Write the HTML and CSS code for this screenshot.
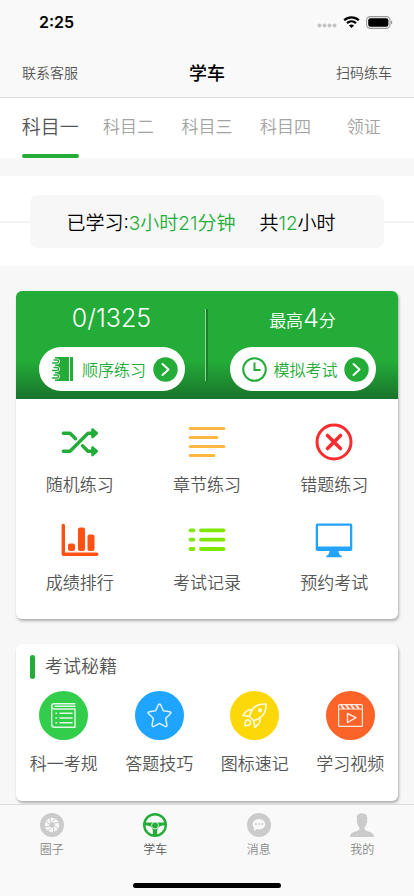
FILE: index.html
```html
<!DOCTYPE html>
<html lang="zh-CN">
<head>
    <meta charset="UTF-8">
    <meta name="viewport" content="width=device-width, initial-scale=1.0">
    <title>学车</title>
    <link rel="stylesheet" href="styles.css">
</head>
<body>
    <header class="header">
        <div class="status-bar">
            <span class="time">2:25</span>
            <div class="status-icons">
                <svg width="20" height="12" viewBox="0 0 20 12" fill="#c4c4c4">
                    <circle cx="2.500" cy="9.500" r="2"/><circle cx="7.500" cy="9.500" r="2"/><circle cx="12.500" cy="9.500" r="2"/><circle cx="17.500" cy="9.500" r="2"/>
                </svg>
                <svg width="17" height="12" viewBox="0 0 17 12" fill="none" stroke="#000" stroke-width="2.300">
                    <path d="M1.200 4.300C5.300.3 11.700.3 15.800 4.300"/>
                    <path d="M4 7.200c2.600-2.400 6.400-2.400 9 0"/>
                    <path d="M8.500 12 5.900 9.400c1.500-1.300 3.700-1.300 5.200 0z" fill="#000" stroke="none"/>
                </svg>
                <svg width="27" height="13" viewBox="0 0 27 13">
                    <rect x=".6" y=".6" width="23.400" height="11.800" rx="3.600" fill="none" stroke="#999" stroke-width="1.100"/>
                    <rect x="2.200" y="2.200" width="20.200" height="8.600" rx="2.200"/>
                    <path d="M25 4.500c1.800.8 1.800 3.200 0 4z" fill="#999"/>
                </svg>
            </div>
        </div>
        <div class="title-bar">
            <a class="title-link" href="#service">联系客服</a>
            <h1 class="title">学车</h1>
            <a class="title-link right" href="#scan">扫码练车</a>
        </div>
    </header>

    <nav class="subjects">
        <a class="subject active" href="#s1">科目一</a>
        <a class="subject" href="#s2">科目二</a>
        <a class="subject" href="#s3">科目三</a>
        <a class="subject" href="#s4">科目四</a>
        <a class="subject" href="#license">领证</a>
    </nav>

    <main class="content">
        <section class="hours">
            <p class="hours-box">
                <span>已学习:<span class="green">3小时21分钟</span></span>
                <span>共<span class="green">12</span>小时</span>
            </p>
        </section>

        <section class="card">
            <div class="score">
                <div class="score-item">
                    <p class="score-text"><span class="big">0/1325</span></p>
                    <button class="pill" type="button">
                        <svg width="24" height="26" viewBox="0 0 24 26">
                            <path d="M4 1h14v24H4zM19 1h3v24h-3z" fill="#23ac38"/>
                            <path d="M0 3h6a2 2 0 0 1 0 5H0zM0 10.500h6a2 2 0 0 1 0 5H0zM0 18h6a2 2 0 0 1 0 5H0z" fill="#fff" stroke="#fff" stroke-width="1"/>
                            <path d="M3 4h3a1.500 1.500 0 0 1 0 3H1.500M3 11.500h3a1.500 1.500 0 0 1 0 3H1.500M3 19h3a1.500 1.500 0 0 1 0 3H1.500" fill="none" stroke="#23ac38" stroke-width="1.500" stroke-linecap="round"/>
                        </svg>
                        <span>顺序练习</span>
                        <svg width="25" height="25" viewBox="0 0 25 25">
                            <circle cx="12.500" cy="12.500" r="12.200" fill="#23ac38"/>
                            <path d="m9.500 7 6 5.500-6 5.500" fill="none" stroke="#fff" stroke-width="2" stroke-linecap="round" stroke-linejoin="round"/>
                        </svg>
                    </button>
                </div>
                <div class="score-item">
                    <p class="score-text">最高<span class="big">4</span>分</p>
                    <button class="pill" type="button">
                        <svg width="25" height="25" viewBox="0 0 25 25" fill="none" stroke="#23ac38">
                            <circle cx="12.500" cy="12.500" r="11.300" stroke-width="2"/>
                            <path d="M12.500 5.500v7.500h6" stroke-width="2"/>
                        </svg>
                        <span>模拟考试</span>
                        <svg width="25" height="25" viewBox="0 0 25 25">
                            <circle cx="12.500" cy="12.500" r="12.200" fill="#23ac38"/>
                            <path d="m9.500 7 6 5.500-6 5.500" fill="none" stroke="#fff" stroke-width="2" stroke-linecap="round" stroke-linejoin="round"/>
                        </svg>
                    </button>
                </div>
            </div>
            <div class="practice">
                <a class="practice-item" href="#random">
                    <svg width="38" height="38" viewBox="0 0 38 38" fill="none" stroke="#23ac38" stroke-width="3.400" stroke-linecap="round" stroke-linejoin="round">
                        <path d="M2.300 10.300H9l5.500 5.500M2.300 28.300H9l18-18h7M21.500 22.800l5.500 5.500h7"/>
                        <path d="M31.500 6.500v7.600l4.300-3.800zM31.500 24.500v7.600l4.300-3.800z" fill="#23ac38" stroke-width="2.600"/>
                    </svg>
                    <span>随机练习</span>
                </a>
                <a class="practice-item" href="#chapter">
                    <svg width="38" height="38" viewBox="0 0 38 38" fill="none" stroke="#fbb742" stroke-width="3.200" stroke-linecap="round">
                        <path d="M2.300 5.500h33.500M2.300 14.500h26.500M2.300 23.500h33.500M2.300 32.500h23.500"/>
                    </svg>
                    <span>章节练习</span>
                </a>
                <a class="practice-item" href="#wrong">
                    <svg width="38" height="38" viewBox="0 0 38 38" fill="none" stroke="#fc2c2e" stroke-linecap="round">
                        <circle cx="19" cy="19" r="17" stroke-width="3"/>
                        <path d="m12.500 12.500 13 13m0-13-13 13" stroke-width="3.600"/>
                    </svg>
                    <span>错题练习</span>
                </a>
                <a class="practice-item" href="#ranking">
                    <svg width="38" height="38" viewBox="0 0 38 38" fill="#ff5113">
                        <path d="M2.300 4.500v28.800h33.500" fill="none" stroke="#ff5113" stroke-width="3.400" stroke-linecap="round" stroke-linejoin="round"/>
                        <rect x="7" y="22.500" width="7" height="7.500" rx="2"/>
                        <rect x="17" y="6.500" width="7" height="23.500" rx="2"/>
                        <rect x="26.500" y="13.500" width="7" height="16.500" rx="2"/>
                    </svg>
                    <span>成绩排行</span>
                </a>
                <a class="practice-item" href="#records">
                    <svg width="38" height="38" viewBox="0 0 38 38" fill="none" stroke="#7fe705" stroke-width="3.800" stroke-linecap="round">
                        <path d="M2.500 9.300h3M13 9.300h22.500M2.500 18.600h3M13 18.600h22.500M2.500 28h3M13 28h22.500"/>
                    </svg>
                    <span>考试记录</span>
                </a>
                <a class="practice-item" href="#booking">
                    <svg width="38" height="38" viewBox="0 0 38 38" fill="#23a3ff">
                        <path fill-rule="evenodd" d="M2.500 2.500h33q1.800 0 1.800 1.800v24q0 1.800-1.800 1.800h-33Q.7 30.100.7 28.300v-24q0-1.800 1.800-1.800zM3 4.800v20.700h32V4.800z"/>
                        <path d="M14.500 30h9q.3 3.800 3.200 5v1.200H11.300V35q2.900-1.200 3.200-5z"/>
                    </svg>
                    <span>预约考试</span>
                </a>
            </div>
        </section>

        <section class="card">
            <h2 class="tips-title">考试秘籍</h2>
            <div class="tips">
                <a class="tip" href="#rules">
                    <span class="tip-icon rules">
                        <svg width="25" height="25" viewBox="0 0 25 25" fill="none" stroke="#fff" stroke-opacity=".85" stroke-width="1.400" stroke-linecap="round">
                            <path d="M24 .7H3Q.7.7.7 3v18.500q0 2.800 2.800 2.800H24V6H3.500Q.7 6 .7 3.300M4 3.300h20"/>
                            <path d="M9 10.300h12M9 15h12M9 19.700h12M5 10.300h.6M5 15h.6M5 19.700h.6" stroke-width="1.600"/>
                        </svg>
                    </span>
                    <span>科一考规</span>
                </a>
                <a class="tip" href="#skills">
                    <span class="tip-icon skills">
                        <svg width="25" height="25" viewBox="0 0 25 25" fill="none" stroke="#fff" stroke-opacity=".85" stroke-width="1.500" stroke-linejoin="round">
                            <path d="M11.300 1.800q1.200-1.800 2.400 0l2.600 6 6.400.9q2.100.5.700 2.100l-4.700 4.500 1.200 6.700q.1 2.200-1.900 1.400L12.500 20.300l-5.500 3.100q-2 .8-1.900-1.400l1.200-6.700-4.700-4.500q-1.400-1.600.7-2.100l6.400-.9z"/>
                        </svg>
                    </span>
                    <span>答题技巧</span>
                </a>
                <a class="tip" href="#signs">
                    <span class="tip-icon signs">
                        <svg width="25" height="25" viewBox="0 0 25 25" fill="none" stroke="#fff" stroke-opacity=".9" stroke-width="1.600" stroke-linejoin="round">
                            <path d="M24 1q-8-.5-12.500 4-3.500 4-4 8.500l4 4Q16 17 20 13q4.500-4.500 4-12z"/>
                            <path d="M10.500 6.500Q6 6.500 4 8.500l-3 4 6.500 1M18 14.500q.5 4.500-1.500 6.500L13 24.300l-1.500-7"/>
                            <path d="M4 17.500q2-1.500 3.700.2T7.800 21.500Q6 23.300 3 22.500q0-3.500 1-5z"/>
                            <circle cx="18" cy="7.300" r="1.300"/>
                        </svg>
                    </span>
                    <span>图标速记</span>
                </a>
                <a class="tip" href="#videos">
                    <span class="tip-icon videos">
                        <svg width="25" height="25" viewBox="0 0 25 25" fill="none" stroke="#fff" stroke-opacity=".85" stroke-width="1.200" stroke-linejoin="round">
                            <rect x=".6" y="1.600" width="23.800" height="21.800" rx="1"/>
                            <path d="M1 6h23"/>
                            <path d="m3 2 3 3.800M8 2l3 3.800M13 2l3 3.800M18 2l3 3.800" stroke-width="2"/>
                            <path d="m9.500 10.500 8.500 4.200-8.500 4.800z" stroke-width="1.400"/>
                        </svg>
                    </span>
                    <span>学习视频</span>
                </a>
            </div>
        </section>
    </main>

    <nav class="tab-bar">
        <div class="tabs">
            <a class="tab" href="#circle">
                <svg width="24" height="24" viewBox="0 0 24 24">
                    <circle cx="12" cy="12" r="12" fill="#cbcbcb"/>
                    <circle cx="12" cy="12" r="7.200" fill="#f9f9f9"/>
                    <circle cx="12" cy="12" r="2.800" fill="#cbcbcb"/>
                    <path d="M12 9.300 15.500 5M14 10l5-.5M14.700 12.500l3.500 3.500M13.500 14.300l.3 5M11 14.700 7.500 18.500M9.500 13.500l-5 .3M9.300 11.500 6 7.500M10.500 9.500 10 5" stroke="#cbcbcb" stroke-width="1"/>
                </svg>
                <span>圈子</span>
            </a>
            <a class="tab active" href="#learn">
                <svg width="24" height="24" viewBox="0 0 24 24" fill="#23ac38">
                    <circle cx="12" cy="12" r="10.800" fill="none" stroke="#23ac38" stroke-width="2.400"/>
                    <path d="M2 9.500h20v2.800l-3.500.5q-3.500.8-4.300 4.200L14 22h-4l-.2-5q-.8-3.400-4.300-4.200L2 12.300z"/>
                    <circle cx="12" cy="12.500" r="3.500" stroke="#fff" stroke-width=".8"/>
                </svg>
                <span>学车</span>
            </a>
            <a class="tab" href="#messages">
                <svg width="24" height="24" viewBox="0 0 24 24" fill="#cbcbcb">
                    <circle cx="12" cy="12" r="12"/>
                    <path d="M12 6c3.500 0 6.200 2.300 6.200 5.200s-2.700 5.200-6.200 5.200c-.8 0-1.500-.1-2.200-.3L7 18.200l.2-3.500c-1-.9-1.500-2.200-1.500-3.500C5.700 8.300 8.500 6 12 6z" fill="#f9f9f9"/>
                    <circle cx="8.800" cy="11" r="1"/><circle cx="12" cy="11" r="1"/><circle cx="15.200" cy="11" r="1"/>
                </svg>
                <span>消息</span>
            </a>
            <a class="tab" href="#mine">
                <svg width="24" height="24" viewBox="0 0 24 24" fill="#cbcbcb">
                    <path d="M6.800 3Q8 .2 12.200.2q5 .3 5 4.800l-.2 2.500q1 1-.4 3-.6 2.500-2 3.800v2q.5 1.500 3.900 2.200 5.500 1 5.500 5.500H0q0-4.500 5.500-5.500 3.400-.7 3.900-2.200v-2q-1.400-1.300-2-3.800-1.400-2-.4-3z"/>
                </svg>
                <span>我的</span>
            </a>
        </div>
        <div class="home-indicator"></div>
    </nav>
</body>
</html>
```
FILE: styles.css
```css
* {
    box-sizing: border-box;
}
body {
    display: flex;
    flex-direction: column;
    min-height: 100vh;
    margin: 0;
    background-color: #f7f7f7;
    color: #555;
    font-family: Inter, "Noto Sans CJK SC", sans-serif;
    font-weight: 350;
}
h1, h2, p {
    margin: 0;
    font-weight: inherit;
}
a {
    color: inherit;
    text-decoration: none;
}
svg {
    display: block;
    flex: none;
}

/* header */
.header {
    background-color: #f9f9f9;
    border-bottom: 1px solid #dcdcdc;
}
.status-bar {
    display: flex;
    align-items: center;
    justify-content: space-between;
    height: 44px;
    padding: 0 21px 0 39px;
}
.time {
    color: #000;
    font-size: 16px;
    font-weight: 600;
}
.status-icons {
    display: flex;
    align-items: center;
    gap: 6px;
}
.title-bar {
    display: grid;
    grid-template-columns: 1fr auto 1fr;
    align-items: center;
    height: 53px;
    padding: 2px 22px 0;
}
.title {
    color: #000;
    font-size: 18px;
    font-weight: 500;
}
.title-link {
    font-size: 14px;
}
.right {
    text-align: right;
}

/* subject tabs */
.subjects {
    display: flex;
    padding: 0 11px;
    background-color: #fff;
}
.subject {
    display: flex;
    flex: 1;
    align-items: center;
    justify-content: center;
    height: 60px;
    padding-bottom: 2px;
    border-bottom: 4px solid transparent;
    color: #a3a3a3;
    font-size: 17px;
}
.subject.active {
    position: relative;
    color: #555;
    font-size: 19px;
}
.subject.active::after {
    content: "";
    position: absolute;
    bottom: -4px;
    width: 57px;
    height: 4px;
    border-radius: 2px;
    background-color: #23ac38;
}

/* study time */
.content {
    flex: 1;
    padding: 18px 0 3px;
}
.hours {
    display: flex;
    align-items: center;
    padding: 19px 0 18px;
    background-color: #fff;
}
.hours::before, .hours::after {
    content: "";
    width: 30px;
    height: 2px;
    background-color: #f3f3f3;
}
.hours-box {
    display: flex;
    flex: 1;
    align-items: center;
    justify-content: center;
    gap: 24px;
    height: 53px;
    padding-right: 12px;
    border-radius: 8px;
    background-color: #f7f7f7;
    color: #000;
    font-size: 19px;
}
.green {
    color: #23ac38;
}

/* cards */
.card {
    margin: 25px 16px 0;
    border-radius: 6px;
    background-color: #fff;
    box-shadow: 1px 2px 3px rgba(0, 0, 0, 0.3);
    overflow: hidden;
}
.score {
    display: flex;
    height: 108px;
    background: linear-gradient(#23ac38 65%, #19732a);
}
.score-item {
    display: flex;
    flex: 1;
    flex-direction: column;
    align-items: center;
    gap: 12px;
    padding-top: 10px;
}
.score-item + .score-item::before {
    content: "";
    align-self: flex-start;
    width: 2px;
    height: 72px;
    margin: 8px 0 -92px -2px;
    border-left: 1px solid #8fd49a;
    background-color: #178028;
}
.score-text {
    height: 34px;
    color: #fff;
    font-size: 17px;
    line-height: 34px;
}
.big {
    font-size: 25px;
}
.pill {
    display: flex;
    align-items: center;
    justify-content: space-between;
    width: 146px;
    height: 44px;
    padding: 0 6px 0 12px;
    border: none;
    border-radius: 22px;
    background-color: #fff;
    color: #23ac38;
    font: inherit;
    font-size: 16px;
}
.practice {
    display: grid;
    grid-template-columns: repeat(3, 1fr);
    row-gap: 21px;
    padding: 24px 0 21px;
}
.practice-item, .tip {
    display: flex;
    flex-direction: column;
    align-items: center;
    font-size: 17px;
    line-height: 24px;
}
.practice-item {
    gap: 12px;
    padding-bottom: 3px;
}
.tips-title {
    display: flex;
    align-items: center;
    gap: 10px;
    padding: 11px 14px 12px;
    font-size: 18px;
    line-height: 24px;
}
.tips-title::before {
    content: "";
    width: 5px;
    height: 24px;
    border-radius: 3px;
    background-color: #23ac38;
}
.tips {
    display: grid;
    grid-template-columns: repeat(4, 1fr);
    padding-bottom: 25px;
}
.tip {
    gap: 12px;
}
.tip-icon {
    display: flex;
    align-items: center;
    justify-content: center;
    width: 49px;
    height: 49px;
    border-radius: 50%;
}
.rules {
    background-color: #32cd4b;
}
.skills {
    background-color: #1fa4ff;
}
.signs {
    background-color: #fdd808;
}
.videos {
    background-color: #fc6329;
}

/* bottom bar */
.tab-bar {
    position: sticky;
    bottom: 0;
    padding-bottom: 8px;
    border-top: 1px solid #dcdcdc;
    background-color: #f9f9f9;
}
.tabs {
    display: flex;
    height: 78px;
    padding-top: 8px;
}
.tab {
    display: flex;
    flex: 1;
    flex-direction: column;
    align-items: center;
    gap: 5px;
    color: #888;
    font-size: 12px;
    line-height: 16px;
}
.tab.active {
    color: #555;
}
.home-indicator {
    width: 148px;
    height: 5px;
    margin: 0 auto;
    border-radius: 3px;
    background-color: #000;
}
```
